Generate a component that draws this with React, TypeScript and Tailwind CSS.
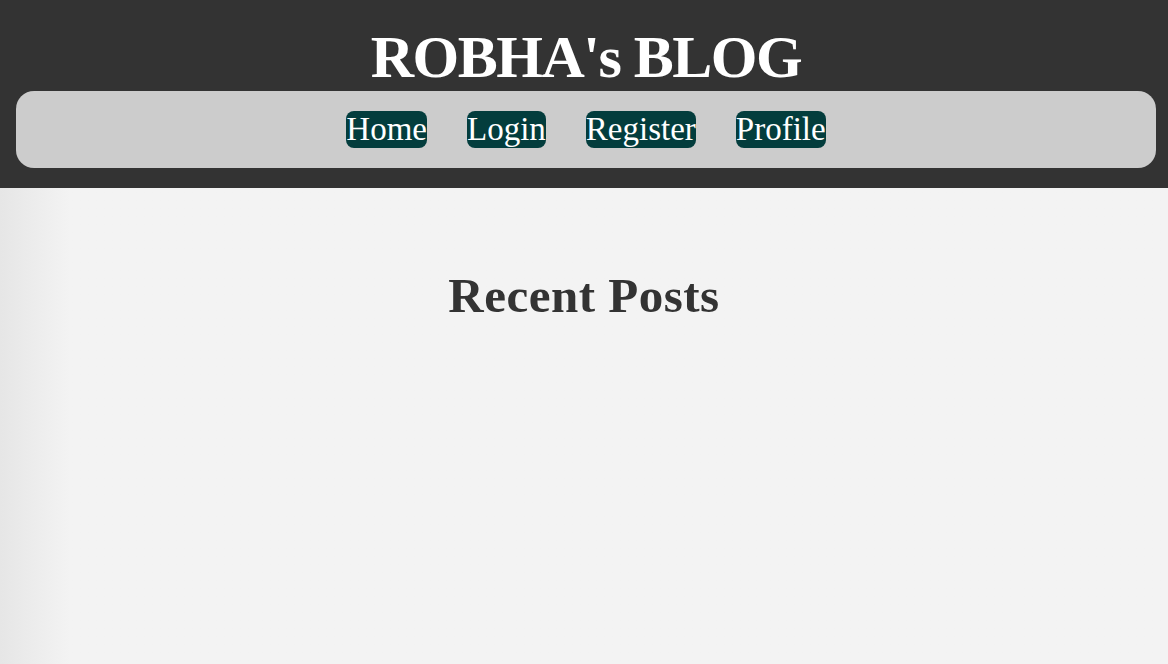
const links = ["Home", "Login", "Register", "Profile"];

export default function App() {
  return (
    <div
      className="min-h-[664px] bg-[#f3f3f3]"
      style={{ fontFamily: '"Liberation Serif", Cambria, serif' }}
    >
      <header className="bg-[#333333] pl-4 pr-3 pb-5">
        <h1 className="h-[91px] pt-[22px] text-center text-[60px] font-bold leading-[70px] tracking-[-1.5px] text-white">
          ROBHA's BLOG
        </h1>
        <nav className="flex h-[77px] items-center justify-center gap-10 rounded-[18px] bg-[#cccccc]">
          {links.map((l) => (
            <a
              key={l}
              href="#"
              className="rounded-lg bg-[#033d3d] text-[33px] leading-[37px] text-white"
            >
              {l}
            </a>
          ))}
        </nav>
      </header>
      <main className="bg-gradient-to-r from-[#e6e6e6] via-[#f3f3f3] via-[6%] to-[#f3f3f3] min-h-[476px] pt-[80px]">
        <h2 className="text-center text-[49px] font-bold leading-[56px] tracking-[0.5px] text-[#333333]">
          Recent Posts
        </h2>
      </main>
    </div>
  );
}
